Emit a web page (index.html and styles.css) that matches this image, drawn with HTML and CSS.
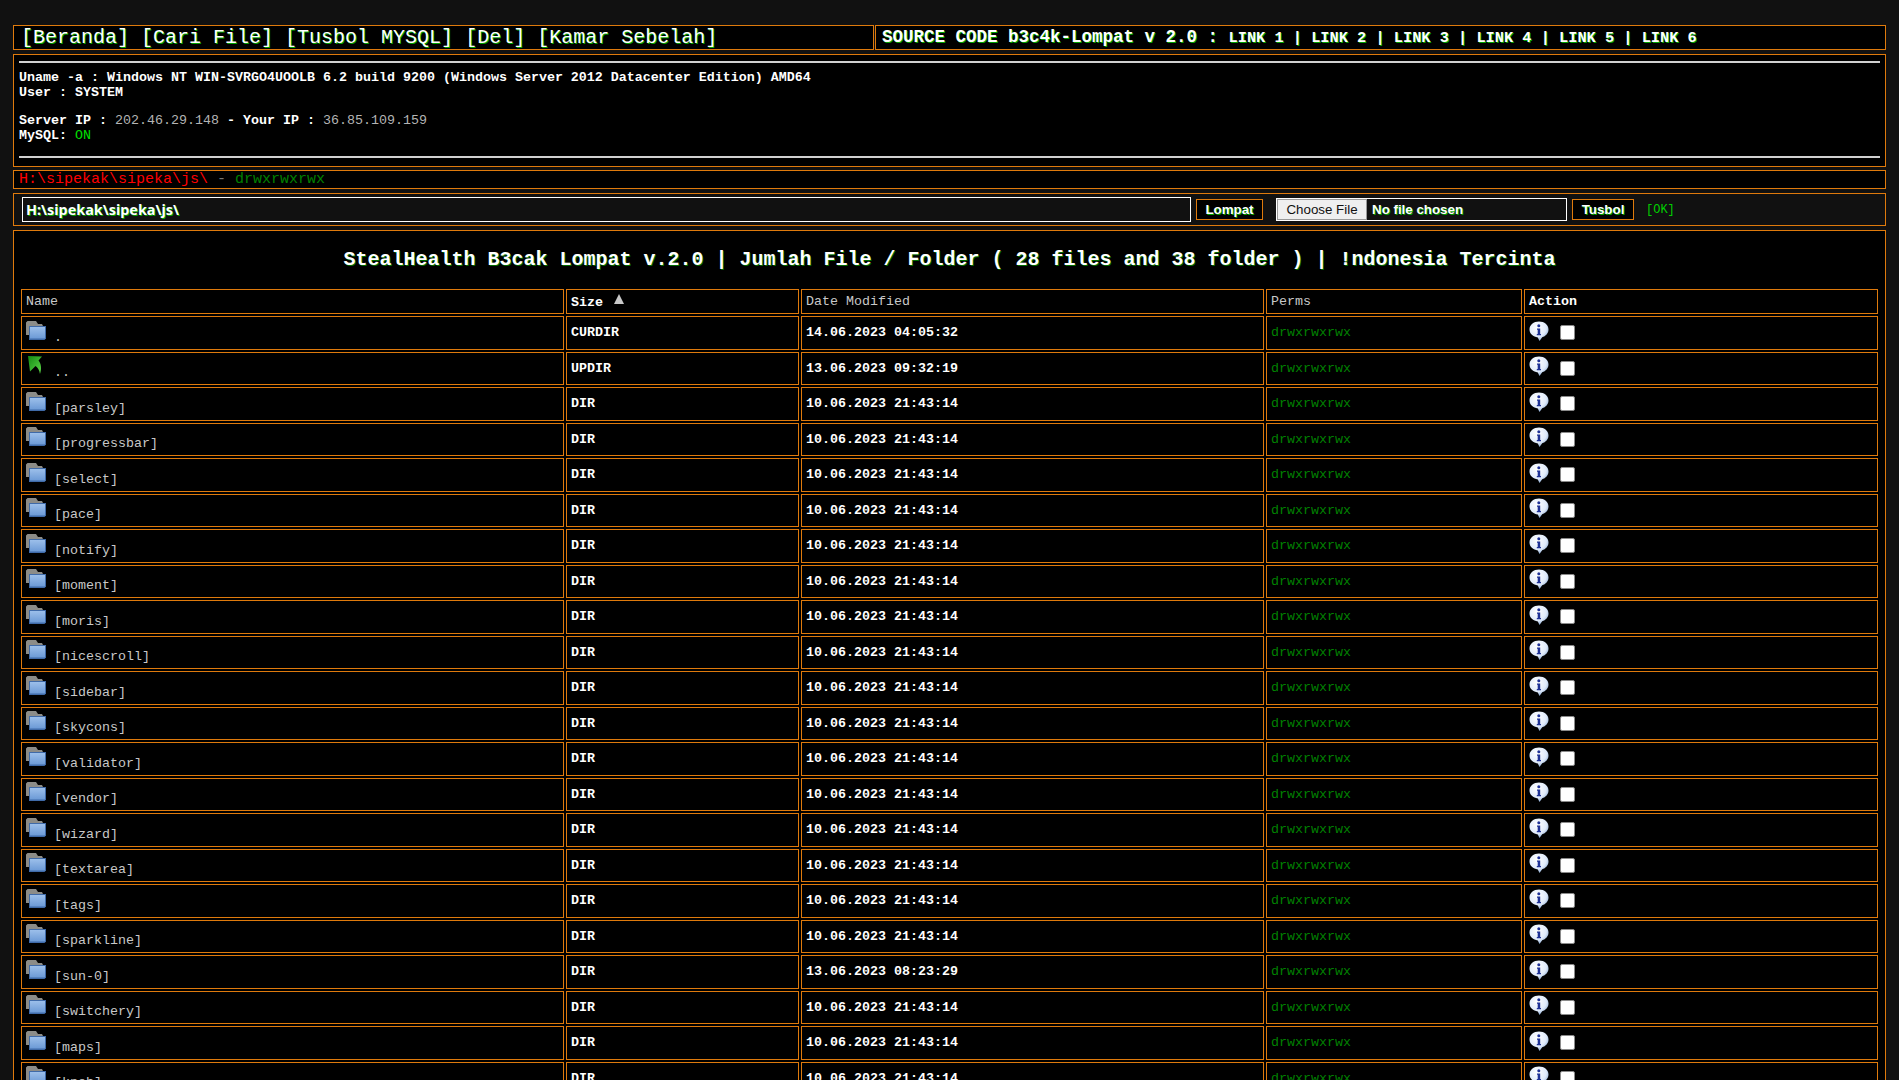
FILE: index.html
```html
<!DOCTYPE html>
<html lang="id">
<head>
  <meta charset="UTF-8">
  <title>b3c4k-Lompat v 2.0</title>
  <link rel="stylesheet" href="styles.css">
</head>
<body>
  <svg class="icon-defs" width="0" height="0">
    <defs>
      <linearGradient id="folder-front" x1="0" y1="0" x2="0" y2="1">
        <stop offset="0" stop-color="#9cbfea"/>
        <stop offset="1" stop-color="#6c9ad6"/>
      </linearGradient>
      <linearGradient id="arrow-green" x1="0" y1="0" x2="1" y2="1">
        <stop offset="0" stop-color="#128a12"/>
        <stop offset="1" stop-color="#5fd84a"/>
      </linearGradient>
      <radialGradient id="info-bubble" cx="0.4" cy="0.3" r="0.75">
        <stop offset="0" stop-color="#ffffff"/>
        <stop offset="0.65" stop-color="#dfeafa"/>
        <stop offset="1" stop-color="#7d9fcc"/>
      </radialGradient>
      <symbol id="i-folder" viewBox="0 0 20 19">
        <path d="M0 1.500 1.500 0H10l2 3h4l1 2v9H0z" fill="#8c8c88"/>
        <path d="M3 5h17v12.500L18.500 19H3z" fill="#3f6aa8"/>
        <path d="M4 6h15v11.500H4z" fill="url(#folder-front)"/>
      </symbol>
      <symbol id="i-up" viewBox="0 0 14 18">
        <path d="M0 0 14 .5 10.500 4.500C13 7.500 14 12 12 18 11.500 14 9.500 11.500 7.500 10L2 15.500z" fill="url(#arrow-green)"/>
      </symbol>
      <symbol id="i-info" viewBox="0 0 20 20">
        <path d="M10 .5c5.400 0 9.500 3.400 9.500 8 0 3.800-2.800 6.800-6.300 7.700L10.500 20 8.800 16.400C4.200 15.900.5 12.600.5 8.500.5 3.900 4.600.5 10 .5z" fill="url(#info-bubble)"/>
        <circle cx="9.800" cy="4.800" r="1.500" fill="#1f3296"/>
        <path d="M8 7.500h3.200V13h.8v1.300H7.800V13h.9V8.800H8z" fill="#1f3296"/>
      </symbol>
    </defs>
  </svg>

  <div class="top-row">
    <div class="box nav">
      <a>[Beranda]</a> <a>[Cari File]</a> <a>[Tusbol MYSQL]</a> <a>[Del]</a> <a>[Kamar Sebelah]</a>
    </div>
    <div class="box source">
      SOURCE CODE b3c4k-Lompat v 2.0 : <span class="links">LINK 1 | LINK 2 | LINK 3 | LINK 4 | LINK 5 | LINK 6</span>
    </div>
  </div>

  <div class="box info">
    <hr>
    <div class="info-text">
      <div>Uname -a : Windows NT WIN-SVRGO4UOOLB 6.2 build 9200 (Windows Server 2012 Datacenter Edition) AMD64</div>
      <div>User : SYSTEM</div>
      <div class="blank"></div>
      <div>Server IP : <span class="dim">202.46.29.148</span> - Your IP : <span class="dim">36.85.109.159</span></div>
      <div>MySQL: <span class="on">ON</span></div>
    </div>
    <hr>
  </div>

  <div class="box path"><span class="path-red">H:\sipekak\sipeka\js\</span> <span class="dash">-</span> <span class="perm">drwxrwxrwx</span></div>

  <form class="box tools">
    <input class="path-input" type="text" value="H:\sipekak\sipeka\js\">
    <button class="btn btn-jump" type="button">Lompat</button>
    <input class="file-input" type="file">
    <button class="btn btn-upload" type="button">Tusbol</button>
    <span class="ok">[OK]</span>
  </form>

  <div class="box listing">
    <h1 class="title">StealHealth B3cak Lompat v.2.0 | Jumlah File / Folder ( 28 files and 38 folder ) | !ndonesia Tercinta</h1>
    <table class="files">
      <colgroup>
        <col class="c-name"><col class="c-size"><col class="c-date"><col class="c-perm"><col class="c-act">
      </colgroup>
      <thead>
        <tr>
          <th class="th-thin">Name</th>
          <th>Size <span class="sort"></span></th>
          <th class="th-thin">Date Modified</th>
          <th class="th-thin">Perms</th>
          <th>Action</th>
        </tr>
      </thead>
      <tbody>
        <tr><td class="name"><svg class="icon-folder"><use href="#i-folder"/></svg>.</td><td>CURDIR</td><td>14.06.2023 04:05:32</td><td class="perm">drwxrwxrwx</td><td><div class="act"><svg class="icon-info"><use href="#i-info"/></svg><input class="check" type="checkbox"></div></td></tr>
        <tr><td class="name"><svg class="icon-up"><use href="#i-up"/></svg>..</td><td>UPDIR</td><td>13.06.2023 09:32:19</td><td class="perm">drwxrwxrwx</td><td><div class="act"><svg class="icon-info"><use href="#i-info"/></svg><input class="check" type="checkbox"></div></td></tr>
        <tr><td class="name"><svg class="icon-folder"><use href="#i-folder"/></svg>[parsley]</td><td>DIR</td><td>10.06.2023 21:43:14</td><td class="perm">drwxrwxrwx</td><td><div class="act"><svg class="icon-info"><use href="#i-info"/></svg><input class="check" type="checkbox"></div></td></tr>
        <tr><td class="name"><svg class="icon-folder"><use href="#i-folder"/></svg>[progressbar]</td><td>DIR</td><td>10.06.2023 21:43:14</td><td class="perm">drwxrwxrwx</td><td><div class="act"><svg class="icon-info"><use href="#i-info"/></svg><input class="check" type="checkbox"></div></td></tr>
        <tr><td class="name"><svg class="icon-folder"><use href="#i-folder"/></svg>[select]</td><td>DIR</td><td>10.06.2023 21:43:14</td><td class="perm">drwxrwxrwx</td><td><div class="act"><svg class="icon-info"><use href="#i-info"/></svg><input class="check" type="checkbox"></div></td></tr>
        <tr><td class="name"><svg class="icon-folder"><use href="#i-folder"/></svg>[pace]</td><td>DIR</td><td>10.06.2023 21:43:14</td><td class="perm">drwxrwxrwx</td><td><div class="act"><svg class="icon-info"><use href="#i-info"/></svg><input class="check" type="checkbox"></div></td></tr>
        <tr><td class="name"><svg class="icon-folder"><use href="#i-folder"/></svg>[notify]</td><td>DIR</td><td>10.06.2023 21:43:14</td><td class="perm">drwxrwxrwx</td><td><div class="act"><svg class="icon-info"><use href="#i-info"/></svg><input class="check" type="checkbox"></div></td></tr>
        <tr><td class="name"><svg class="icon-folder"><use href="#i-folder"/></svg>[moment]</td><td>DIR</td><td>10.06.2023 21:43:14</td><td class="perm">drwxrwxrwx</td><td><div class="act"><svg class="icon-info"><use href="#i-info"/></svg><input class="check" type="checkbox"></div></td></tr>
        <tr><td class="name"><svg class="icon-folder"><use href="#i-folder"/></svg>[moris]</td><td>DIR</td><td>10.06.2023 21:43:14</td><td class="perm">drwxrwxrwx</td><td><div class="act"><svg class="icon-info"><use href="#i-info"/></svg><input class="check" type="checkbox"></div></td></tr>
        <tr><td class="name"><svg class="icon-folder"><use href="#i-folder"/></svg>[nicescroll]</td><td>DIR</td><td>10.06.2023 21:43:14</td><td class="perm">drwxrwxrwx</td><td><div class="act"><svg class="icon-info"><use href="#i-info"/></svg><input class="check" type="checkbox"></div></td></tr>
        <tr><td class="name"><svg class="icon-folder"><use href="#i-folder"/></svg>[sidebar]</td><td>DIR</td><td>10.06.2023 21:43:14</td><td class="perm">drwxrwxrwx</td><td><div class="act"><svg class="icon-info"><use href="#i-info"/></svg><input class="check" type="checkbox"></div></td></tr>
        <tr><td class="name"><svg class="icon-folder"><use href="#i-folder"/></svg>[skycons]</td><td>DIR</td><td>10.06.2023 21:43:14</td><td class="perm">drwxrwxrwx</td><td><div class="act"><svg class="icon-info"><use href="#i-info"/></svg><input class="check" type="checkbox"></div></td></tr>
        <tr><td class="name"><svg class="icon-folder"><use href="#i-folder"/></svg>[validator]</td><td>DIR</td><td>10.06.2023 21:43:14</td><td class="perm">drwxrwxrwx</td><td><div class="act"><svg class="icon-info"><use href="#i-info"/></svg><input class="check" type="checkbox"></div></td></tr>
        <tr><td class="name"><svg class="icon-folder"><use href="#i-folder"/></svg>[vendor]</td><td>DIR</td><td>10.06.2023 21:43:14</td><td class="perm">drwxrwxrwx</td><td><div class="act"><svg class="icon-info"><use href="#i-info"/></svg><input class="check" type="checkbox"></div></td></tr>
        <tr><td class="name"><svg class="icon-folder"><use href="#i-folder"/></svg>[wizard]</td><td>DIR</td><td>10.06.2023 21:43:14</td><td class="perm">drwxrwxrwx</td><td><div class="act"><svg class="icon-info"><use href="#i-info"/></svg><input class="check" type="checkbox"></div></td></tr>
        <tr><td class="name"><svg class="icon-folder"><use href="#i-folder"/></svg>[textarea]</td><td>DIR</td><td>10.06.2023 21:43:14</td><td class="perm">drwxrwxrwx</td><td><div class="act"><svg class="icon-info"><use href="#i-info"/></svg><input class="check" type="checkbox"></div></td></tr>
        <tr><td class="name"><svg class="icon-folder"><use href="#i-folder"/></svg>[tags]</td><td>DIR</td><td>10.06.2023 21:43:14</td><td class="perm">drwxrwxrwx</td><td><div class="act"><svg class="icon-info"><use href="#i-info"/></svg><input class="check" type="checkbox"></div></td></tr>
        <tr><td class="name"><svg class="icon-folder"><use href="#i-folder"/></svg>[sparkline]</td><td>DIR</td><td>10.06.2023 21:43:14</td><td class="perm">drwxrwxrwx</td><td><div class="act"><svg class="icon-info"><use href="#i-info"/></svg><input class="check" type="checkbox"></div></td></tr>
        <tr><td class="name"><svg class="icon-folder"><use href="#i-folder"/></svg>[sun-0]</td><td>DIR</td><td>13.06.2023 08:23:29</td><td class="perm">drwxrwxrwx</td><td><div class="act"><svg class="icon-info"><use href="#i-info"/></svg><input class="check" type="checkbox"></div></td></tr>
        <tr><td class="name"><svg class="icon-folder"><use href="#i-folder"/></svg>[switchery]</td><td>DIR</td><td>10.06.2023 21:43:14</td><td class="perm">drwxrwxrwx</td><td><div class="act"><svg class="icon-info"><use href="#i-info"/></svg><input class="check" type="checkbox"></div></td></tr>
        <tr><td class="name"><svg class="icon-folder"><use href="#i-folder"/></svg>[maps]</td><td>DIR</td><td>10.06.2023 21:43:14</td><td class="perm">drwxrwxrwx</td><td><div class="act"><svg class="icon-info"><use href="#i-info"/></svg><input class="check" type="checkbox"></div></td></tr>
        <tr><td class="name"><svg class="icon-folder"><use href="#i-folder"/></svg>[knob]</td><td>DIR</td><td>10.06.2023 21:43:14</td><td class="perm">drwxrwxrwx</td><td><div class="act"><svg class="icon-info"><use href="#i-info"/></svg><input class="check" type="checkbox"></div></td></tr>
      </tbody>
    </table>
  </div>
</body>
</html>
```

FILE: styles.css
```css
html, body {
  height: 100vh;
  overflow: hidden;
}

body {
  margin: 0;
  padding: 25px 13px 0;
  box-sizing: border-box;
  background: #111;
  color: #fff;
  font-family: "Liberation Mono", "Courier New", monospace;
  font-size: 13.33px;
}

.icon-defs {
  position: absolute;
}

.box {
  border: 1px solid #df7a0c;
  background: #000;
}

.top-row {
  display: flex;
  gap: 1px;
  margin-bottom: 4px;
}

.nav {
  width: 861px;
  height: 25px;
  box-sizing: border-box;
  padding-left: 7px;
  font-size: 20px;
  line-height: 23px;
  white-space: nowrap;
  text-shadow: 1px 1px 0 #00a000;
}

.source {
  flex: 1;
  height: 25px;
  box-sizing: border-box;
  padding-left: 6px;
  font-size: 17.5px;
  font-weight: bold;
  line-height: 23px;
  white-space: nowrap;
  text-shadow: 1px 1px 0 #00a000;
}

.links {
  font-size: 15.3px;
}

.info {
  height: 113px;
  box-sizing: border-box;
  padding: 6px 5px 0;
  margin-bottom: 3px;
}

.info hr {
  margin: 0;
  height: 2px;
  border: 0;
  background: #d0d0d0;
}

.info-text {
  height: 93px;
  padding-top: 7px;
  box-sizing: border-box;
  line-height: 15px;
  font-weight: bold;
}

.blank {
  height: 13px;
}

.dim {
  color: #b4b4b4;
  font-weight: normal;
}

.on {
  color: #00e000;
  font-weight: normal;
}

.path {
  height: 19px;
  box-sizing: border-box;
  padding-left: 5px;
  margin-bottom: 4px;
  font-size: 15px;
  line-height: 17px;
}

.path-red {
  color: #f00;
}

.dash {
  color: #777;
}

.perm {
  color: #008000;
}

.tools {
  display: flex;
  align-items: center;
  height: 33px;
  box-sizing: border-box;
  padding-left: 8px;
  margin-bottom: 4px;
  background: #111;
}

.path-input {
  width: 1169px;
  height: 25px;
  box-sizing: border-box;
  padding: 0 3px;
  border: 1px solid #fff;
  background: #111;
  color: #fff;
  font: bold 14.4px "Noto Sans", Arial, sans-serif;
  text-shadow: 1px 1px 0 #00a000;
}

.btn {
  height: 21px;
  box-sizing: border-box;
  margin-left: 5px;
  padding: 0;
  border: 1px solid #df7a0c;
  background: #000;
  color: #fff;
  font: bold 13.33px "Liberation Sans", Arial, sans-serif;
  text-shadow: 1px 1px 0 #00a000;
}

.btn-jump {
  width: 67px;
}

.btn-upload {
  width: 62px;
}

.file-input {
  width: 291px;
  height: 23px;
  box-sizing: border-box;
  margin: 0 0 0 13px;
  border: 1px solid #fff;
  background: #111;
  color: #fff;
  font: bold 13.33px "Liberation Sans", Arial, sans-serif;
  text-shadow: 1px 1px 0 #00a000;
}

.file-input::file-selector-button {
  width: 90px;
  height: 21px;
  margin-right: 5px;
  border: 1px solid #999;
  background: #efefef;
  color: #111;
  font: 13.33px "Liberation Sans", Arial, sans-serif;
  text-shadow: none;
}

.ok {
  margin-left: 12px;
  color: #00d000;
  font-size: 12px;
}

.listing {
  padding: 0 5px;
}

.title {
  margin: 0;
  padding: 19px 0 18px;
  font-size: 20px;
  line-height: 19px;
  text-align: center;
  text-shadow: 1px 1px 0 #006a00;
}

.files {
  width: 1859px;
  table-layout: fixed;
  border-collapse: separate;
  border-spacing: 2px;
}

.c-name { width: 543px; }
.c-size { width: 233px; }
.c-date { width: 463px; }
.c-perm { width: 256px; }
.c-act { width: 354px; }

.files th,
.files td {
  box-sizing: border-box;
  padding: 0 4px;
  border: 1px solid #df7a0c;
  text-align: left;
  white-space: nowrap;
}

.files th {
  height: 25px;
}

.files th.th-thin {
  color: #c8c8c8;
  font-weight: normal;
}

.files td {
  height: 33.5px;
  font-weight: bold;
}

.files td.name {
  color: #c8c8c8;
  font-weight: normal;
  vertical-align: bottom;
  padding-bottom: 4px;
}

.files td.perm {
  color: #008000;
  font-weight: normal;
}

.sort {
  display: inline-block;
  width: 0;
  height: 0;
  margin: 0 0 2px 3px;
  border-left: 5.5px solid transparent;
  border-right: 5.5px solid transparent;
  border-bottom: 10px solid #c9c9c9;
}

.icon-folder {
  width: 20px;
  height: 19px;
  margin-right: 8px;
  vertical-align: 1px;
}

.icon-up {
  width: 14px;
  height: 18px;
  margin: 0 12px 0 2px;
  vertical-align: 2px;
}

.act {
  display: flex;
  align-items: center;
}

.icon-info {
  width: 20px;
  height: 20px;
  margin: 0 11px 4px 0;
}

.check {
  appearance: none;
  width: 15px;
  height: 15px;
  margin: 0;
  box-sizing: border-box;
  border: 1px solid #8a8a8a;
  border-radius: 2px;
  background: #fff;
}
```
